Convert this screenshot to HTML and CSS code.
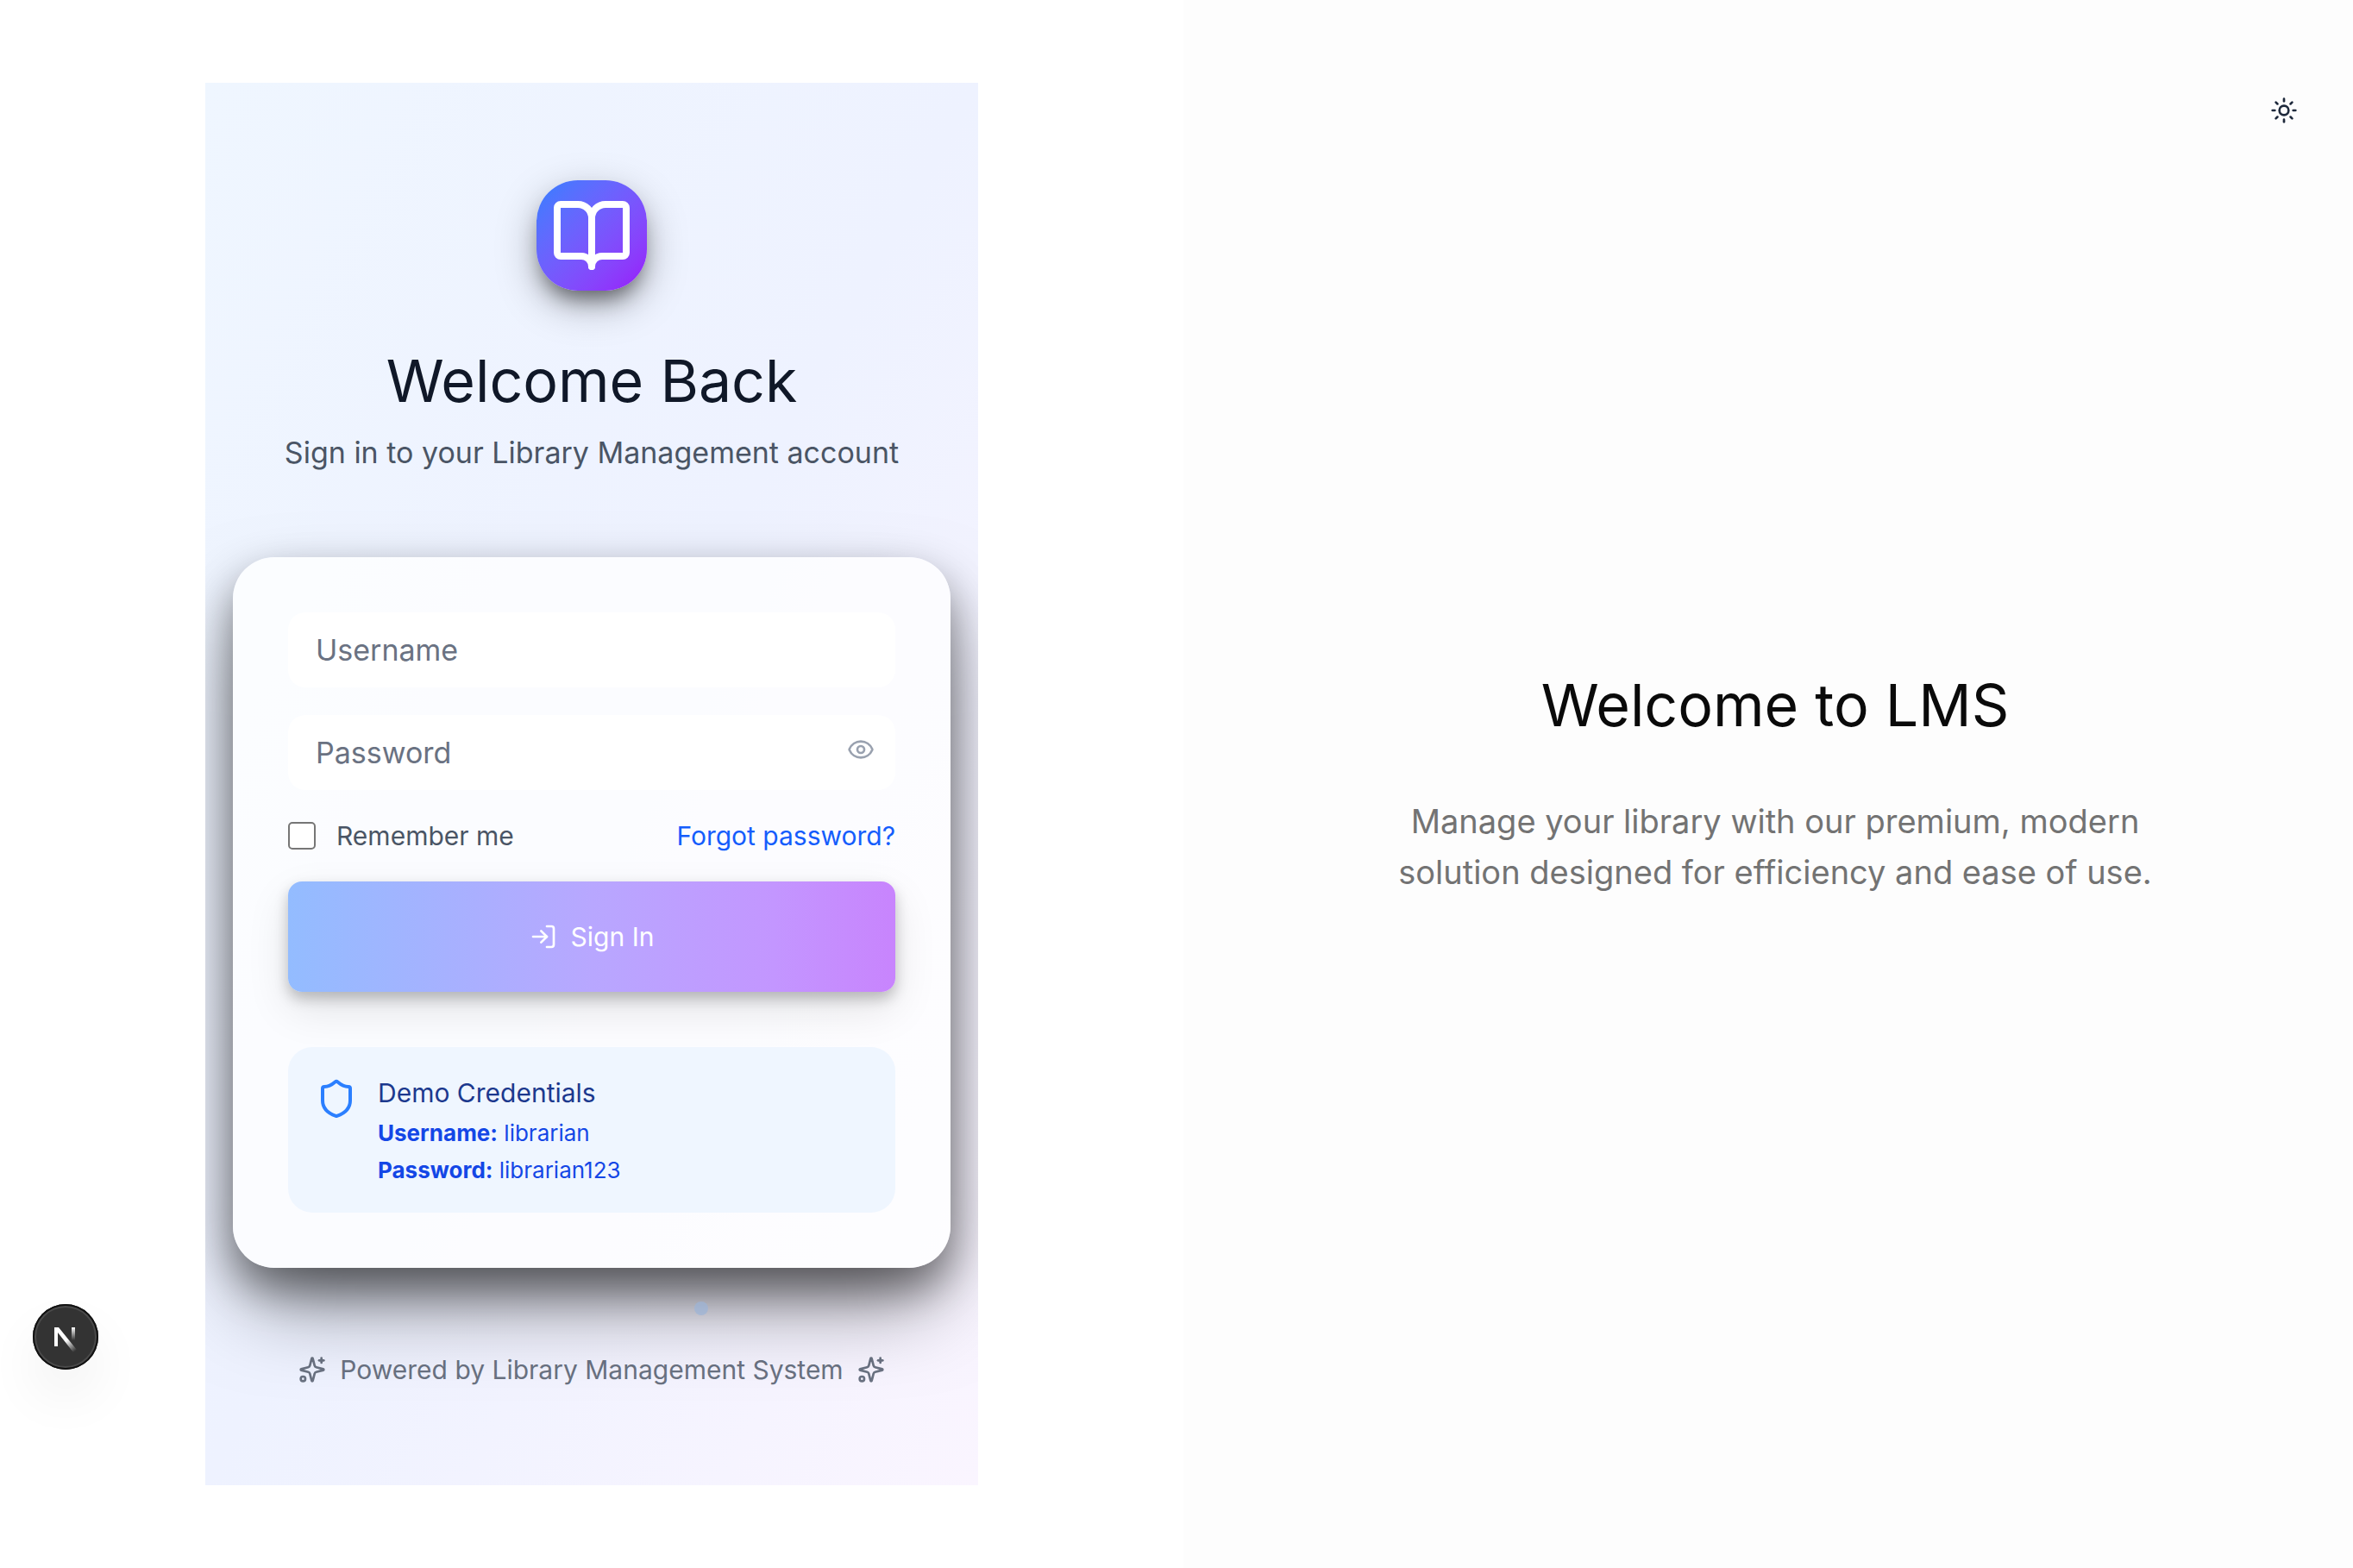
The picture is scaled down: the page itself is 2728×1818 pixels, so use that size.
FILE: index.html
```html
<!DOCTYPE html>
<html lang="en">
<head>
<meta charset="utf-8">
<title>Library Management System – Sign in</title>
<link rel="stylesheet" href="styles.css">
</head>
<body>
<div class="layout">
  <main class="login">
    <section class="panel">
      <header class="intro">
        <div class="logo">
          <svg class="icon" viewBox="0 0 24 24" aria-hidden="true"><path d="M12 7v14"/><path d="M3 18a1 1 0 0 1-1-1V4a1 1 0 0 1 1-1h5a4 4 0 0 1 4 4 4 4 0 0 1 4-4h5a1 1 0 0 1 1 1v13a1 1 0 0 1-1 1h-6a3 3 0 0 0-3 3 3 3 0 0 0-3-3z"/></svg>
        </div>
        <h1 class="title">Welcome Back</h1>
        <p class="subtitle">Sign in to your Library Management account</p>
      </header>

      <div class="card">
        <form class="form">
          <input class="field" type="text" placeholder="Username" aria-label="Username">
          <div class="password">
            <input class="field" type="password" placeholder="Password" aria-label="Password">
            <button class="reveal" type="button" aria-label="Show password">
              <svg class="icon" viewBox="0 0 24 24" aria-hidden="true"><path d="M2.062 12.348a1 1 0 0 1 0-.696 10.75 10.75 0 0 1 19.876 0 1 1 0 0 1 0 .696 10.75 10.75 0 0 1-19.876 0"/><circle cx="12" cy="12" r="3"/></svg>
            </button>
          </div>
          <div class="options">
            <label class="remember"><input class="checkbox" type="checkbox">Remember me</label>
            <a class="forgot" href="#forgot">Forgot password?</a>
          </div>
          <button class="submit" type="submit">
            <svg class="icon" viewBox="0 0 24 24" aria-hidden="true"><path d="m10 17 5-5-5-5"/><path d="M15 12H3"/><path d="M15 3h4a2 2 0 0 1 2 2v14a2 2 0 0 1-2 2h-4"/></svg>
            Sign In
          </button>
        </form>
        <aside class="demo">
          <svg class="icon shield" viewBox="0 0 24 24" aria-hidden="true"><path d="M20 13c0 5-3.500 7.500-7.660 8.950a1 1 0 0 1-.67-.01C7.500 20.500 4 18 4 13V6a1 1 0 0 1 1-1c2 0 4.500-1.200 6.240-2.720a1.170 1.170 0 0 1 1.520 0C14.510 3.810 17 5 19 5a1 1 0 0 1 1 1z"/></svg>
          <div>
            <h2 class="demo-title">Demo Credentials</h2>
            <p class="demo-line"><strong>Username:</strong> librarian</p>
            <p class="demo-line"><strong>Password:</strong> librarian123</p>
          </div>
        </aside>
        <span class="particle"></span>
      </div>

      <footer class="powered">
        <svg class="icon" viewBox="0 0 24 24" aria-hidden="true"><path d="M9.937 15.500A2 2 0 0 0 8.500 14.063l-6.135-1.582a.5.5 0 0 1 0-.962L8.500 9.936A2 2 0 0 0 9.937 8.500l1.582-6.135a.5.5 0 0 1 .963 0L14.063 8.500A2 2 0 0 0 15.500 9.937l6.135 1.581a.5.5 0 0 1 0 .964L15.500 14.063a2 2 0 0 0-1.437 1.437l-1.582 6.135a.5.5 0 0 1-.963 0z"/><path d="M20 2v4"/><path d="M22 4h-4"/><circle cx="4" cy="20" r="2"/></svg>
        <span>Powered by Library Management System</span>
        <svg class="icon" viewBox="0 0 24 24" aria-hidden="true"><path d="M9.937 15.500A2 2 0 0 0 8.500 14.063l-6.135-1.582a.5.5 0 0 1 0-.962L8.500 9.936A2 2 0 0 0 9.937 8.500l1.582-6.135a.5.5 0 0 1 .963 0L14.063 8.500A2 2 0 0 0 15.500 9.937l6.135 1.581a.5.5 0 0 1 0 .964L15.500 14.063a2 2 0 0 0-1.437 1.437l-1.582 6.135a.5.5 0 0 1-.963 0z"/><path d="M20 2v4"/><path d="M22 4h-4"/><circle cx="4" cy="20" r="2"/></svg>
      </footer>
    </section>
  </main>

  <section class="hero">
    <h2 class="hero-title">Welcome to LMS</h2>
    <p class="hero-text">Manage your library with our premium, modern solution designed for efficiency and ease of use.</p>
  </section>
</div>

<button class="theme" type="button" aria-label="Toggle theme">
  <svg class="icon" viewBox="0 0 24 24" aria-hidden="true"><circle cx="12" cy="12" r="4"/><path d="M12 2v2"/><path d="M12 20v2"/><path d="m4.930 4.930 1.410 1.410"/><path d="m17.660 17.660 1.410 1.410"/><path d="M2 12h2"/><path d="M20 12h2"/><path d="m6.340 17.660-1.410 1.410"/><path d="m19.070 4.930-1.410 1.410"/></svg>
</button>

<button class="devtools" type="button" aria-label="Open developer tools">
  <svg viewBox="0 0 76 76" aria-hidden="true">
    <defs>
      <linearGradient id="stem" x1="47" y1="27" x2="47" y2="42" gradientUnits="userSpaceOnUse"><stop offset="0" stop-color="#fff"/><stop offset="1" stop-color="#fff" stop-opacity="0"/></linearGradient>
      <linearGradient id="slash" x1="40" y1="41" x2="50" y2="54" gradientUnits="userSpaceOnUse"><stop offset="0" stop-color="#fff"/><stop offset="1" stop-color="#fff" stop-opacity="0"/></linearGradient>
    </defs>
    <path d="M25 27h5L51 53l-4 3L29 33v16h-4z" fill="url(#slash)"/>
    <path d="M45 27h4v15h-4z" fill="url(#stem)"/>
  </svg>
</button>
</body>
</html>
```
FILE: styles.css
```css
* { box-sizing: border-box; }

body {
  margin: 0;
  font-family: Inter, "Liberation Sans", sans-serif;
  font-size: 34px;
  color: #0a0a0a;
  background: #fff;
  overflow-x: hidden;
}

h1, h2, p { margin: 0; font-weight: 400; }

button { font: inherit; border: 0; padding: 0; }

.icon {
  display: block;
  flex: none;
  width: 32px;
  height: 32px;
  fill: none;
  stroke: currentColor;
  stroke-width: 2;
  stroke-linecap: round;
  stroke-linejoin: round;
}

/* The two halves run slightly past the right edge of the window. */
.layout {
  display: grid;
  grid-template-columns: 1fr 1fr;
  width: calc(100% + 16px);
  min-height: 100vh;
}

.login {
  display: flex;
  align-items: center;
  justify-content: center;
  padding: 32px;
}

.panel {
  width: 100%;
  max-width: 896px;
  padding: 113px 32px 112px;
  background: linear-gradient(to bottom right, #eff6ff, #eef2ff 50%, #faf5ff);
  overflow: hidden;
}

.intro { text-align: center; }

.logo {
  width: 128px;
  height: 128px;
  margin: 0 auto 64px;
  padding: 16px;
  border-radius: 48px;
  color: #fff;
  background: linear-gradient(135deg in oklab, #2b7fff, #9810fa);
  box-shadow: 0 16px 24px -8px rgb(0 0 0 / 50%), 0 16px 48px rgb(0 0 0 / 28%);
}

.logo .icon { width: 96px; height: 96px; }

.title { font-size: 68px; line-height: 80px; color: #101828; }

.subtitle { margin-top: 16px; line-height: 56px; color: #4a5565; }

.card {
  position: relative;
  margin-top: 93px;
  padding: 64px;
  border-radius: 48px;
  background: rgb(255 255 255 / 76%);
  box-shadow: 0 50px 100px -16px rgb(0 0 0 / 50%), 0 24px 48px rgb(0 0 0 / 40%);
}

.form { display: flex; flex-direction: column; gap: 32px; }

.field {
  display: block;
  width: 100%;
  height: 87px;
  padding: 0 32px;
  border: 0;
  border-radius: 20px;
  font: inherit;
  color: #101828;
  background: rgb(255 255 255 / 90%);
}

.field::placeholder { color: #6a7282; opacity: 1; }

.password { position: relative; }

.reveal {
  position: absolute;
  right: 24px;
  top: 24px;
  color: #99a1af;
  background: none;
}

.options {
  display: flex;
  justify-content: space-between;
  align-items: center;
  font-size: 30px;
  line-height: 42px;
}

.remember { display: flex; align-items: center; gap: 24px; color: #4a5565; }

.checkbox {
  appearance: none;
  width: 32px;
  height: 32px;
  margin: 0;
  border: 2px solid #767676;
  border-radius: 5px;
  background: #fff;
}

.forgot { color: #155dfc; text-decoration: none; }

.submit {
  display: flex;
  align-items: center;
  justify-content: center;
  gap: 16px;
  height: 128px;
  border-radius: 16px;
  font-size: 30px;
  color: #fff;
  background: linear-gradient(90deg, #93bcff, #b8a7ff 50%, #c396ff 80%, #c884fd);
  box-shadow: 0 20px 50px rgb(0 0 0 / 10%), 0 8px 16px rgb(0 0 0 / 22%);
}

.demo {
  display: flex;
  gap: 24px;
  margin-top: 64px;
  padding: 28px 32px;
  border-radius: 28px;
  background: #eff6ff;
}

.demo .shield { width: 48px; height: 48px; margin-top: 8px; color: #2b7fff; }

.demo-title { font-size: 30px; line-height: 50px; color: #1c398e; }

.demo-line { font-size: 26px; line-height: 43px; color: #1447e6; }

.particle {
  position: absolute;
  left: 535px;
  bottom: -55px;
  width: 16px;
  height: 16px;
  border-radius: 50%;
  background: rgb(155 180 215 / 70%);
}

.powered {
  display: flex;
  align-items: center;
  justify-content: center;
  gap: 16px;
  margin-top: 96px;
  font-size: 30px;
  line-height: 44px;
  color: #6a7282;
}

.hero {
  display: flex;
  flex-direction: column;
  align-items: center;
  justify-content: center;
  gap: 66px;
  padding: 96px;
  text-align: center;
  background: #fdfdfd;
}

.hero-title { font-size: 68px; line-height: 80px; }

.hero-text { max-width: 896px; font-size: 38px; line-height: 59px; color: #737373; }

.theme {
  position: absolute;
  top: 112px;
  right: 64px;
  color: #1e293b;
  background: none;
}

.devtools {
  position: fixed;
  left: 38px;
  bottom: 230px;
  width: 76px;
  height: 76px;
  border-radius: 50%;
  background: #333;
  box-shadow: inset 0 0 0 2px #111, inset 0 0 0 4px #4a4a4a, 0 32px 64px rgb(0 0 0 / 6%);
}

.devtools svg { display: block; width: 76px; height: 76px; }
```
